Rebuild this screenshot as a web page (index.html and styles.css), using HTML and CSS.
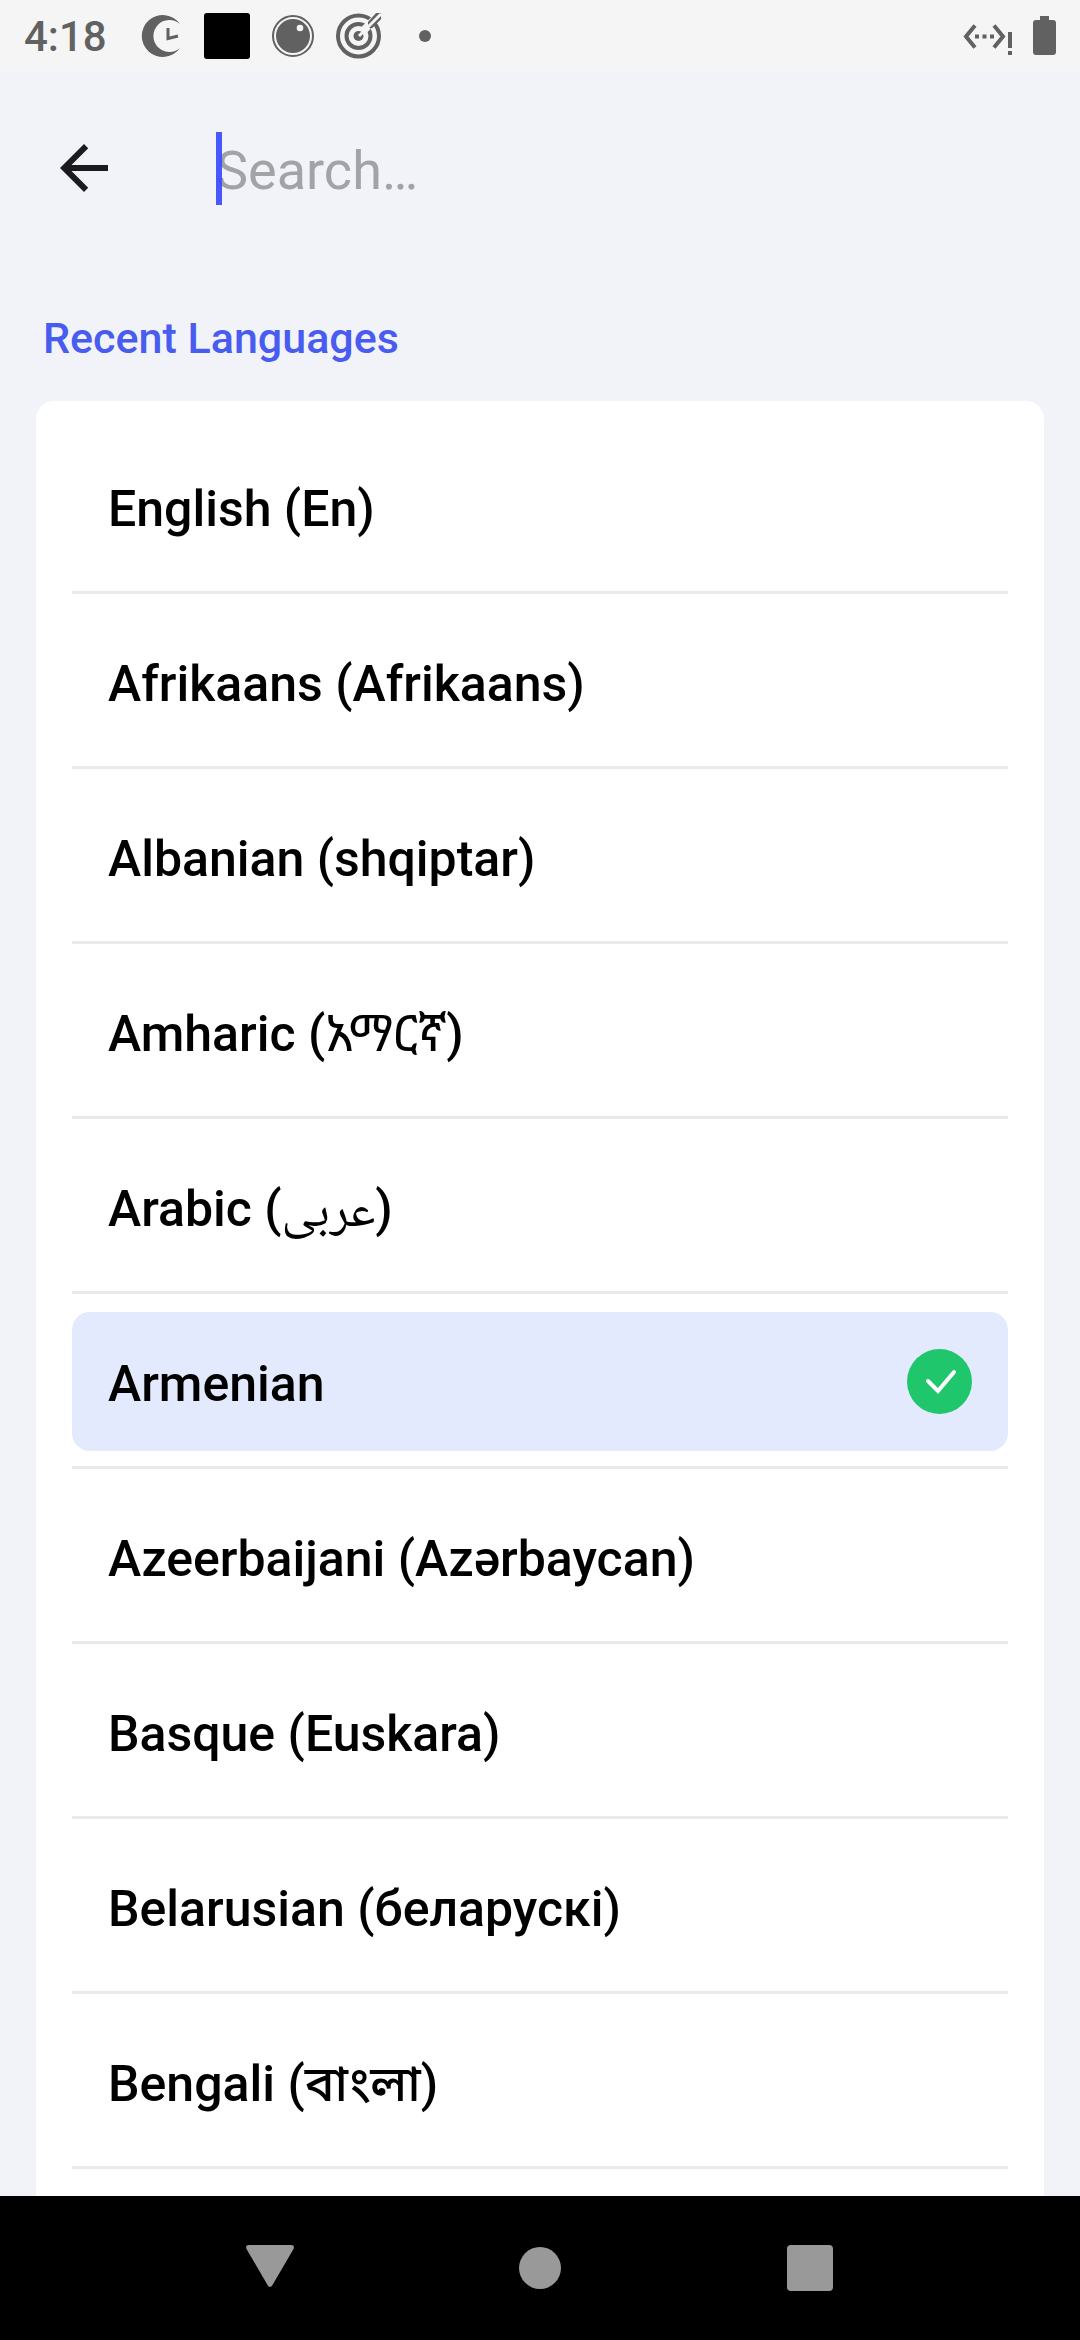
FILE: index.html
```html
<!DOCTYPE html>
<html lang="en">
<head>
<meta charset="utf-8">
<meta name="viewport" content="width=device-width, initial-scale=1">
<title>Languages</title>
<link rel="stylesheet" href="styles.css">
</head>
<body>
<header class="status">
  <time class="clock">4:18</time>
  <div class="status-icons">
    <svg class="status-icon" viewBox="0 0 48 48" aria-hidden="true"><path d="M43 12A21 21 0 1 0 43 36A16 16 0 1 1 43 12Z" fill="#616161"/><path d="M31 16v10.500L41 24" fill="none" stroke="#616161" stroke-width="3"/></svg>
    <svg class="status-icon" viewBox="0 0 48 48" aria-hidden="true"><rect x="1" y="1" width="46" height="46" rx="3" fill="#000"/></svg>
    <svg class="status-icon" viewBox="0 0 48 48" aria-hidden="true"><circle cx="24" cy="24" r="20" fill="none" stroke="#616161" stroke-width="2"/><circle cx="24" cy="24" r="17" fill="#616161"/><circle cx="31" cy="16" r="3.300" fill="#f5f5f5"/></svg>
    <svg class="status-icon" viewBox="0 0 48 48" aria-hidden="true"><g fill="none" stroke="#616161" stroke-width="4"><circle cx="23.500" cy="24" r="20.500"/><circle cx="23.500" cy="24" r="12"/></g><circle cx="23.500" cy="24" r="5" fill="#616161"/><path d="M29 18L46 1" stroke="#f5f5f5" stroke-width="8"/><path d="M33 10L41 1H46V7L37 16H33Z" fill="#616161"/><path d="M24 24L46 2" stroke="#f5f5f5" stroke-width="3"/><path d="M34 18L38 15L46 7V5Z" fill="#616161"/></svg>
    <svg class="status-icon" viewBox="0 0 48 48" aria-hidden="true"><circle cx="24" cy="24" r="6" fill="#616161"/></svg>
  </div>
  <svg class="network" viewBox="0 0 52 48" aria-hidden="true"><path d="M13 13.500L4 24.500L13 35.500M32 13.500L41 24.500L32 35.500" fill="none" stroke="#616161" stroke-width="4"/><path d="M13 22.500h4v4h-4zM20.500 22.500h4v4h-4zM28 22.500h4v4h-4zM46 20h4v16h-4zM46 39h4v4h-4z" fill="#616161"/></svg>
  <svg class="battery" viewBox="0 0 24 48" aria-hidden="true"><path d="M8 4h9v4h4q3 0 3 3v29q0 3-3 3H4q-3 0-3-3V11q0-3 3-3h4z" fill="#616161"/></svg>
</header>
<div class="toolbar">
  <button class="back" type="button" aria-label="Back"><svg class="back-icon" viewBox="0 0 24 24" aria-hidden="true"><path d="M20 11H7.830l5.590-5.590L12 4l-8 8 8 8 1.410-1.410L7.830 13H20z" fill="#1b1b1f"/></svg></button>
  <div class="search">
    <input class="search-input" type="text" placeholder="Search…" aria-label="Search">
    <span class="caret"></span>
  </div>
</div>
<main class="content">
  <h1 class="heading">Recent Languages</h1>
  <ul class="card">
    <li class="row"><label class="option"><input class="radio" type="radio" name="language"><span class="name">English (En)</span></label></li>
    <li class="row"><label class="option"><input class="radio" type="radio" name="language"><span class="name">Afrikaans (Afrikaans)</span></label></li>
    <li class="row"><label class="option"><input class="radio" type="radio" name="language"><span class="name">Albanian (shqiptar)</span></label></li>
    <li class="row"><label class="option"><input class="radio" type="radio" name="language"><span class="name">Amharic (<span class="native amharic" lang="am">አማርኛ</span>)</span></label></li>
    <li class="row"><label class="option"><input class="radio" type="radio" name="language"><span class="name">Arabic (<span class="native arabic" lang="ar">عربى</span>)</span></label></li>
    <li class="row"><label class="option selected"><input class="radio" type="radio" name="language" checked><span class="name">Armenian</span><svg class="check" viewBox="0 0 65 65" aria-hidden="true"><circle cx="32.500" cy="32.500" r="32.500" fill="#20c66b"/><path d="M21 32L31 42L47 23" fill="none" stroke="#fff" stroke-width="4" stroke-linecap="round"/></svg></label></li>
    <li class="row"><label class="option"><input class="radio" type="radio" name="language"><span class="name">Azeerbaijani (Azərbaycan)</span></label></li>
    <li class="row"><label class="option"><input class="radio" type="radio" name="language"><span class="name">Basque (Euskara)</span></label></li>
    <li class="row"><label class="option"><input class="radio" type="radio" name="language"><span class="name">Belarusian (беларускі)</span></label></li>
    <li class="row"><label class="option"><input class="radio" type="radio" name="language"><span class="name">Bengali (<span class="native bengali" lang="bn">বাংলা</span>)</span></label></li>
    <li class="row"></li>
  </ul>
</main>
<nav class="system-nav" aria-label="System">
  <button class="nav-button" type="button" aria-label="Back"><svg class="nav-icon" viewBox="0 0 48 48" aria-hidden="true"><path d="M3 1H45Q49 1 47.500 5L26.500 41Q24 45 21.500 41L.5 5Q-1 1 3 1Z" fill="#999"/></svg></button>
  <button class="nav-button" type="button" aria-label="Home"><svg class="nav-icon" viewBox="0 0 48 48" aria-hidden="true"><circle cx="24" cy="24" r="21" fill="#999"/></svg></button>
  <button class="nav-button" type="button" aria-label="Overview"><svg class="nav-icon" viewBox="0 0 48 48" aria-hidden="true"><rect x="1" y="1" width="46" height="46" rx="4" fill="#999"/></svg></button>
</nav>
</body>
</html>
```
FILE: styles.css
```css
* {
  box-sizing: border-box;
}

body {
  display: flex;
  flex-direction: column;
  height: 100vh;
  margin: 0;
  overflow: hidden;
  background: #f2f3f9;
  color: #000;
  font-family: Roboto, "Noto Sans", sans-serif;
}

button {
  display: grid;
  place-items: center;
  padding: 0;
  border: 0;
  background: none;
}

svg {
  display: block;
  flex: none;
}

.status {
  display: flex;
  flex: none;
  align-items: center;
  height: 72px;
  padding: 0 24px;
  background: #f5f5f5;
}

.clock {
  width: 113px;
  padding-top: 2px;
  color: #616161;
  font-size: 42px;
  font-weight: 500;
  line-height: 48px;
}

.status-icons {
  display: flex;
  flex: 1;
  gap: 18px;
}

.status-icon {
  width: 48px;
  height: 48px;
}

.network {
  width: 52px;
  height: 48px;
  margin-right: 18px;
}

.battery {
  width: 24px;
  height: 48px;
}

.toolbar {
  display: flex;
  flex: none;
  align-items: center;
  gap: 84px;
  height: 192px;
  padding: 0 36px;
}

.back {
  width: 96px;
  height: 96px;
}

.back-icon {
  width: 72px;
  height: 72px;
}

.search {
  position: relative;
  flex: 1;
}

.search-input {
  display: block;
  width: 100%;
  height: 73px;
  padding: 4px 0 0;
  border: 0;
  outline: 0;
  background: none;
  color: #000;
  font: 400 54px/64px Roboto, "Noto Sans", sans-serif;
}

.search-input::placeholder {
  color: #a2a3a7;
  opacity: 1;
}

.caret {
  position: absolute;
  top: 0;
  left: 0;
  width: 6px;
  height: 100%;
  background: rgb(58 75 255 / 92%);
}

.content {
  flex: 1;
  min-height: 0;
  padding: 48px 36px 0;
  overflow: hidden;
}

.heading {
  margin: 0 0 36px;
  padding: 0 7px;
  color: #485cf0;
  font-size: 43px;
  font-weight: 500;
  line-height: 53px;
}

.card {
  margin: 0;
  padding: 18px 36px;
  border-radius: 18px;
  background: #fff;
  list-style: none;
}

.row {
  padding: 18px 0 15px;
  border-bottom: 3px solid #e9e9e9;
}

.option {
  position: relative;
  display: flex;
  align-items: center;
  height: 139px;
  padding: 0 36px;
  border-radius: 18px;
  font-size: 50px;
  font-weight: 500;
  line-height: 60px;
}

.name {
  padding-top: 4px;
}

.selected {
  background: #e3eafd;
}

.radio {
  position: absolute;
  margin: 0;
  opacity: 0;
}

/* Keeps the taller native scripts from moving the row's baseline. */
.native {
  line-height: 0;
}

.amharic {
  font-family: "Noto Sans Ethiopic", Roboto, sans-serif;
  font-weight: 400;
}

.arabic {
  font-family: "Noto Naskh Arabic", "Noto Sans Arabic", Roboto, sans-serif;
  font-weight: 400;
}

.bengali {
  font-family: "Noto Sans Bengali", Roboto, sans-serif;
  font-weight: 500;
}

.check {
  width: 65px;
  height: 65px;
  margin-left: auto;
}

.system-nav {
  display: grid;
  flex: none;
  grid-template-columns: repeat(3, 1fr);
  height: 144px;
  padding: 0 12.5%;
  background: #000;
}

.nav-icon {
  width: 48px;
  height: 48px;
}
```
